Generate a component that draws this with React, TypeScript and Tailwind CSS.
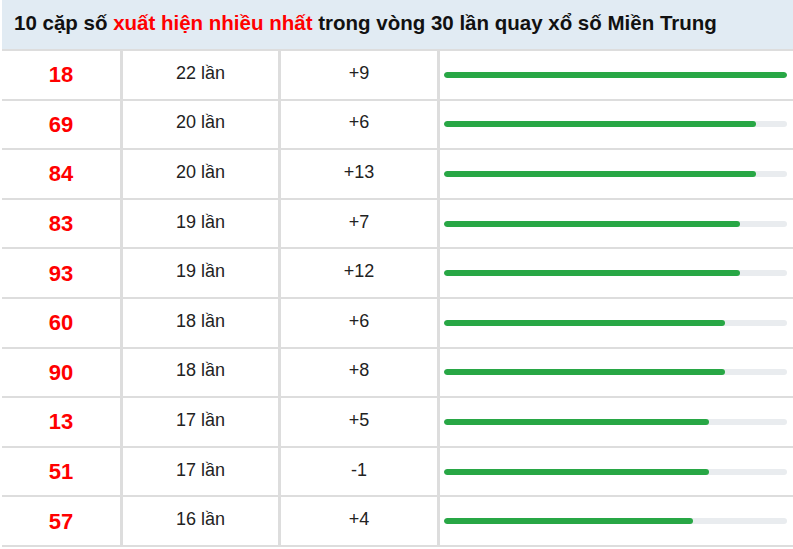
import React from "react";

const rows = [
  { n: "18", c: 22, d: "+9" },
  { n: "69", c: 20, d: "+6" },
  { n: "84", c: 20, d: "+13" },
  { n: "83", c: 19, d: "+7" },
  { n: "93", c: 19, d: "+12" },
  { n: "60", c: 18, d: "+6" },
  { n: "90", c: 18, d: "+8" },
  { n: "13", c: 17, d: "+5" },
  { n: "51", c: 17, d: "-1" },
  { n: "57", c: 16, d: "+4" },
];

export default function App() {
  return (
    <div
      className="w-[793px] h-[549px] bg-white overflow-hidden"
      style={{ fontFamily: '"Liberation Sans", Arial, sans-serif' }}
    >
      <div className="ml-[2px] w-[793px]">
        <div className="h-[51px] bg-[#e1ebf3] border-b-2 border-[#dddddd] flex items-center pl-[12px] pb-[2px] text-[20.5px] font-bold text-[#111]">
          <span>
            10 cặp số <span className="text-[#ff0000]">xuất hiện nhiều nhất</span> trong vòng 30 lần quay xổ số Miền Trung
          </span>
        </div>
        {rows.map((r, i) => (
          <div
            key={i}
            className="grid grid-cols-[118px_158px_159px_1fr] h-[49.6px] border-b-2 border-[#dddddd]"
          >
            <div className="flex items-center justify-center text-[22px] font-bold text-[#ff0000]">
              {r.n}
            </div>
            <div className="flex items-center justify-center border-l-[3px] border-[#dddddd] text-[18px] text-[#222] pb-[3px]">
              {r.c} lần
            </div>
            <div className="flex items-center justify-center border-l-[3px] border-[#dddddd] text-[18px] text-[#222] pb-[3px]">
              {r.d}
            </div>
            <div className="flex items-center border-l-[3px] border-[#dddddd] pl-[4px] pr-[8px]">
              <div className="w-full h-[6px] rounded-full bg-[#e9ecef] overflow-hidden">
                <div
                  className="h-full rounded-full bg-[#28a745]"
                  style={{ width: `${(r.c / 22) * 100}%` }}
                />
              </div>
            </div>
          </div>
        ))}
      </div>
    </div>
  );
}
